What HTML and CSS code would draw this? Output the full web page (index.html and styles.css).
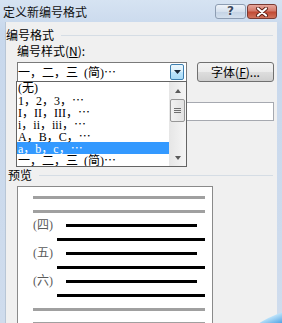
FILE: index.html
```html
<!DOCTYPE html>
<html lang="zh-CN">
<head>
<meta charset="utf-8">
<link rel="stylesheet" href="styles.css">
</head>
<body>
<div class="window">
  <div class="titlebar">
    <span class="title">定义新编号格式</span>
    <div class="tb-buttons">
      <div class="tb-btn help">?</div>
      <div class="tb-btn close">
        <svg width="14" height="10" viewBox="0 0 14 10">
          <path d="M3 1.5 L11 8.5 M11 1.5 L3 8.5" stroke="#5a1e14" stroke-width="4" stroke-linecap="round"/>
          <path d="M3 1.5 L11 8.5 M11 1.5 L3 8.5" stroke="#ffffff" stroke-width="2.2" stroke-linecap="round"/>
        </svg>
      </div>
    </div>
  </div>
  <div class="client">
    <div class="group-head"><span>编号格式</span><i class="rule"></i></div>
    <div class="field-label">编号样式(<u>N</u>):</div>
    <div class="combo-row">
      <div class="combo">
        <span class="combo-text">一，二，三&#8194;(简)<span class="ell">…</span></span>
        <span class="combo-btn">
          <svg width="7" height="4" viewBox="0 0 7 4"><path d="M0 0 H7 L3.5 4 Z" fill="#1b2a3a"/></svg>
        </span>
        <div class="droplist">
          <div class="items">
            <div class="li">(无)</div>
            <div class="li">1，2，3，<span class="ell">…</span></div>
            <div class="li">I，II，III，<span class="ell">…</span></div>
            <div class="li">i，ii，iii，<span class="ell">…</span></div>
            <div class="li">A，B，C，<span class="ell">…</span></div>
            <div class="li sel">a，b，c，<span class="ell">…</span></div>
            <div class="li">一，二，三&#8194;(简)<span class="ell">…</span></div>
          </div>
          <div class="vscroll">
            <span class="arrow up"></span>
            <span class="thumb"><i></i><i></i><i></i></span>
            <span class="track"></span>
            <span class="arrow down"></span>
          </div>
        </div>
      </div>
      <div class="btn">字体(<u>F</u>)...</div>
    </div>
    <div class="textbox"></div>
    <div class="group-head preview-head"><span>预览</span><i class="rule"></i></div>
    <div class="preview">
      <div class="pr"><i class="ln gray"></i></div>
      <div class="pr"><i class="ln gray"></i></div>
      <div class="pr num"><span class="lbl">(四)</span><i class="ln blk short"></i></div>
      <div class="pr cont"><i class="ln blk"></i></div>
      <div class="pr num"><span class="lbl">(五)</span><i class="ln blk short"></i></div>
      <div class="pr cont"><i class="ln blk"></i></div>
      <div class="pr num"><span class="lbl">(六)</span><i class="ln blk short"></i></div>
      <div class="pr cont"><i class="ln blk"></i></div>
      <div class="pr"><i class="ln gray"></i></div>
      <div class="pr"><i class="ln gray"></i></div>
    </div>
  </div>
  <div class="swoosh"></div>
</div>
</body>
</html>
```

FILE: styles.css
```css
html, body {
  margin: 0;
  padding: 0;
  background: #ffffff;
}

.window {
  position: relative;
  width: 282px;
  height: 323px;
  overflow: hidden;
  background: linear-gradient(#d6e3f2, #c8d8ec 30px, #cfdced);
  font-family: "Noto Sans CJK SC", sans-serif;
  font-size: 12px;
  color: #000;
}

.titlebar {
  height: 22px;
  display: flex;
  justify-content: space-between;
  align-items: flex-start;
}

.title {
  padding: 4px 0 0 3px;
  line-height: 16px;
  color: #101010;
}

.tb-buttons {
  display: flex;
  gap: 1px;
  margin: 4px 5px 0 0;
}

.tb-btn {
  height: 15px;
  box-sizing: border-box;
  border-radius: 3px;
  display: flex;
  align-items: center;
  justify-content: center;
}

.help {
  width: 31px;
  border: 1px solid #8d9db2;
  background: linear-gradient(#eef3f9, #d6e1ee 50%, #c3d2e4 51%, #d4e0ee);
  font-family: "DejaVu Sans", sans-serif;
  font-weight: bold;
  font-size: 12px;
  line-height: 13px;
  color: #3b4a5e;
  text-shadow: 0 0 2px #ffffff;
}

.close {
  width: 30px;
  border: 1px solid #7a3a32;
  background: linear-gradient(#e6a79c, #d47a6a 45%, #c14a34 55%, #d0735c);
}

.client {
  margin: 0 5px;
  height: 301px;
  box-sizing: border-box;
  padding-top: 5px;
  background: #f0f0f0;
  border-left: 1px solid #b8c6d6;
}

.group-head {
  display: flex;
  align-items: center;
  gap: 7px;
  height: 16px;
  line-height: 16px;
  margin-right: 4px;
}

.rule {
  flex: 1;
  height: 1px;
  background: #d5dde5;
}

.preview-head {
  padding-left: 2px;
  margin-top: 46px;
}

.field-label {
  margin-left: 11px;
  height: 16px;
  line-height: 16px;
}

.combo-row {
  display: flex;
  gap: 10px;
  margin: 3px 3px 0 11px;
  height: 20px;
}

.combo {
  position: relative;
  width: 170px;
  height: 20px;
  box-sizing: border-box;
  border: 1px solid #7a7a7a;
  background: #ffffff;
  display: flex;
  align-items: center;
  justify-content: space-between;
}

.combo-text {
  padding-left: 0;
  line-height: 18px;
  font-family: "Liberation Serif", "Noto Sans CJK SC", serif;
  font-size: 12px;
}

.ell {
  font-family: "Noto Sans CJK SC", sans-serif;
}

.combo-btn {
  width: 14px;
  height: 16px;
  box-sizing: border-box;
  margin-right: 2px;
  border: 1px solid #3c7fb1;
  border-radius: 2px;
  background: linear-gradient(#eaf6fd, #d9f0fc 50%, #bee6fd 51%, #a7d9f5);
  display: flex;
  align-items: center;
  justify-content: center;
}

.droplist {
  position: absolute;
  top: 18px;
  left: -2px;
  width: 171px;
  height: 86px;
  box-sizing: border-box;
  border: 1px solid #646464;
  background: #ffffff;
  display: flex;
  z-index: 2;
}

.items {
  flex: 1;
  overflow: hidden;
}

.li {
  height: 12px;
  line-height: 12px;
  padding-left: 1px;
  white-space: nowrap;
  font-family: "Liberation Serif", "Noto Sans CJK SC", serif;
  font-size: 12px;
  color: #000;
}

.li.sel {
  background: #3399ff;
  color: #ffffff;
}

.vscroll {
  width: 17px;
  display: flex;
  flex-direction: column;
  align-items: center;
  background: linear-gradient(90deg, #e6e6e6, #f5f5f5);
}

.arrow {
  width: 0;
  height: 0;
  border-left: 3.5px solid transparent;
  border-right: 3.5px solid transparent;
}

.arrow.up {
  margin-top: 7px;
  border-bottom: 4px solid #5a5a5a;
}

.arrow.down {
  margin-bottom: 6px;
  border-top: 4px solid #5a5a5a;
}

.thumb {
  margin-top: 6px;
  width: 15px;
  height: 23px;
  box-sizing: border-box;
  border: 1px solid #979797;
  border-radius: 2px;
  background: linear-gradient(90deg, #f2f2f2, #e2e2e2);
  display: flex;
  flex-direction: column;
  align-items: center;
  justify-content: center;
  gap: 1px;
}

.thumb i {
  width: 7px;
  height: 1px;
  background: #6f6f6f;
}

.track {
  flex: 1;
}

.btn {
  width: 77px;
  height: 20px;
  box-sizing: border-box;
  border: 1px solid #707070;
  border-radius: 3px;
  background: linear-gradient(#f2f2f2, #ebebeb 50%, #dddddd 51%, #cfcfcf);
  text-align: center;
  line-height: 18px;
}

.textbox {
  margin: 20px 3px 0 11px;
  height: 19px;
  box-sizing: border-box;
  border: 1px solid #a6a9b0;
  background: #ffffff;
}

.preview {
  margin: 3px 0 0 11px;
  width: 196px;
  height: 140px;
  box-sizing: border-box;
  border: 1px solid #8a8a8a;
  background: #ffffff;
  padding-top: 3px;
}

.pr {
  height: 14px;
  display: flex;
  align-items: center;
  padding: 0 7px 0 15px;
}

.pr.cont {
  padding-left: 39px;
}

.pr.num .lbl {
  width: 33px;
  font-family: "Liberation Serif", "Noto Sans CJK SC", serif;
  font-size: 12px;
  line-height: 14px;
  color: #5a5a5a;
}

.ln {
  flex: 1;
  height: 3px;
}

.ln.gray {
  background: #a0a0a0;
}

.ln.blk {
  background: #000000;
}

.ln.short {
  margin-right: 8px;
}

.swoosh {
  position: absolute;
  left: 238px;
  top: 313px;
  width: 90px;
  height: 30px;
  border-radius: 50%;
  transform: rotate(-22deg);
  background: linear-gradient(#bfe4fa, #3a97e0 40%, #1f6fc8);
}
```
